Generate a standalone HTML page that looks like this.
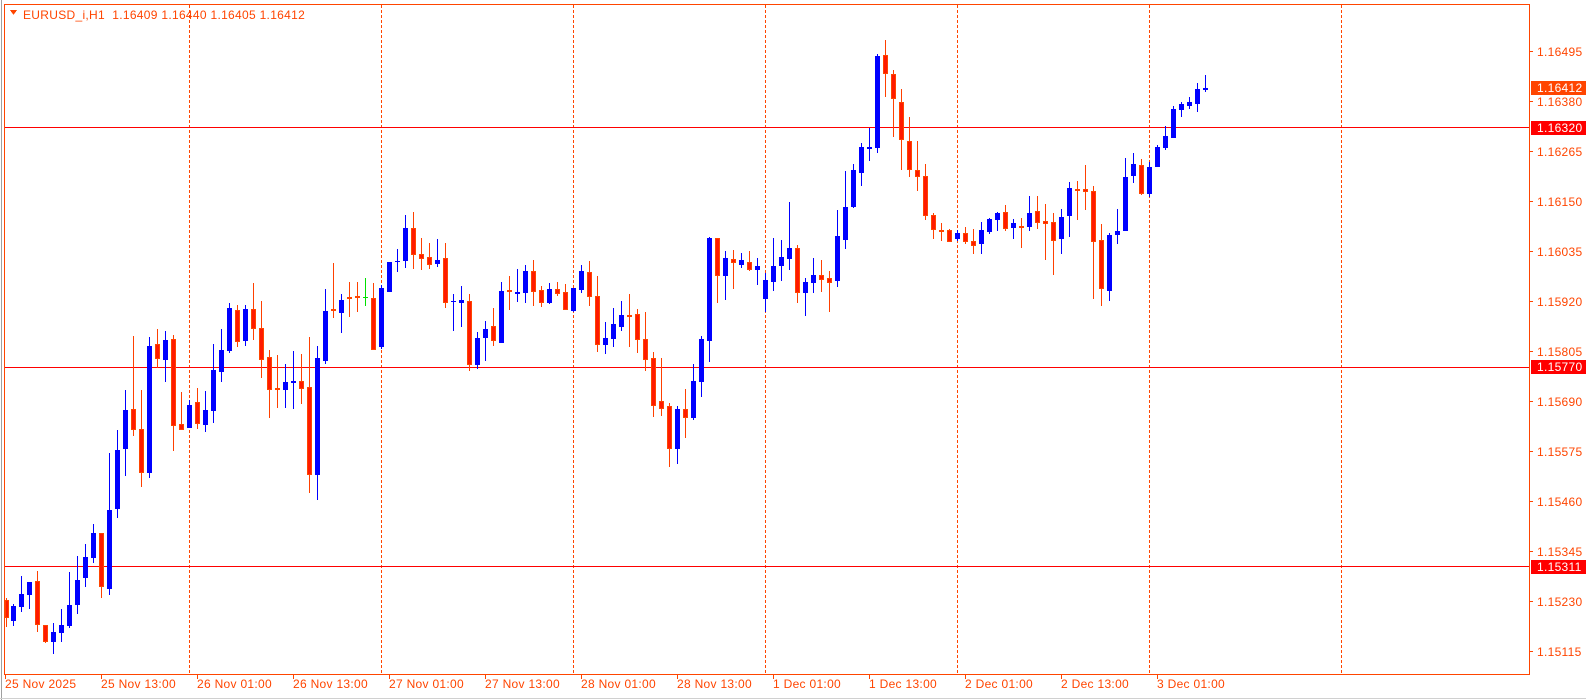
<!DOCTYPE html>
<html><head><meta charset="utf-8"><style>
html,body{margin:0;padding:0;background:#fff;}
body{width:1586px;height:700px;overflow:hidden;position:relative;font-family:"Liberation Sans",sans-serif;}
svg{position:absolute;left:0;top:0;}
text{font-family:"Liberation Sans",sans-serif;font-size:12px;letter-spacing:0.3px;white-space:pre;}
.b line{stroke:#0000ff;stroke-width:1}
.b rect{fill:#0000ff}
.r line{stroke:#ff4000;stroke-width:1}
.r rect{fill:#ff1a00;stroke:#ff4500;stroke-width:1}
</style></head><body>
<svg width="1586" height="700" viewBox="0 0 1586 700" shape-rendering="crispEdges">
<rect x="0" y="0" width="1586" height="700" fill="#fff"/>
<line x1="1.5" y1="0" x2="1.5" y2="700" stroke="#a0a0a0"/>
<line x1="0" y1="698.5" x2="1586" y2="698.5" stroke="#d0d0d0"/>
<rect x="4.5" y="4.5" width="1525" height="670" fill="none" stroke="#ff4500"/>
<g stroke="#ff4500" stroke-dasharray="3,2">
<line x1="189.5" y1="5" x2="189.5" y2="674"/><line x1="381.5" y1="5" x2="381.5" y2="674"/>
<line x1="573.5" y1="5" x2="573.5" y2="674"/><line x1="765.5" y1="5" x2="765.5" y2="674"/>
<line x1="957.5" y1="5" x2="957.5" y2="674"/><line x1="1149.5" y1="5" x2="1149.5" y2="674"/>
<line x1="1341.5" y1="5" x2="1341.5" y2="674"/>
</g>
<g stroke="#ff0000"><line x1="5" y1="127.5" x2="1529" y2="127.5"/><line x1="5" y1="367.5" x2="1529" y2="367.5"/><line x1="5" y1="566.5" x2="1529" y2="566.5"/></g>
<polygon points="10,10 17,10 13.5,15" fill="#ff4500"/>
<text x="23" y="19" fill="#ff4500" xml:space="preserve">EURUSD_i,H1  1.16409 1.16440 1.16405 1.16412</text>
<g fill="#ff4500" stroke="#ff4500">
<line x1="1530" y1="51.5" x2="1533" y2="51.5"/><line x1="1530" y1="101.5" x2="1533" y2="101.5"/><line x1="1530" y1="151.5" x2="1533" y2="151.5"/><line x1="1530" y1="201.5" x2="1533" y2="201.5"/><line x1="1530" y1="251.5" x2="1533" y2="251.5"/><line x1="1530" y1="301.5" x2="1533" y2="301.5"/><line x1="1530" y1="351.5" x2="1533" y2="351.5"/><line x1="1530" y1="401.5" x2="1533" y2="401.5"/><line x1="1530" y1="451.5" x2="1533" y2="451.5"/><line x1="1530" y1="501.5" x2="1533" y2="501.5"/><line x1="1530" y1="551.5" x2="1533" y2="551.5"/><line x1="1530" y1="601.5" x2="1533" y2="601.5"/><line x1="1530" y1="651.5" x2="1533" y2="651.5"/>
</g>
<g fill="#ff4500">
<text x="1537" y="56">1.16495</text><text x="1537" y="106">1.16380</text><text x="1537" y="156">1.16265</text><text x="1537" y="206">1.16150</text><text x="1537" y="256">1.16035</text><text x="1537" y="306">1.15920</text><text x="1537" y="356">1.15805</text><text x="1537" y="406">1.15690</text><text x="1537" y="456">1.15575</text><text x="1537" y="506">1.15460</text><text x="1537" y="556">1.15345</text><text x="1537" y="606">1.15230</text><text x="1537" y="656">1.15115</text>
</g>
<rect x="1531" y="81" width="55" height="14" fill="#ff4500"/><text x="1537" y="92" fill="#fff">1.16412</text>
<rect x="1531" y="121" width="55" height="14" fill="#ff0000"/><text x="1537" y="132" fill="#fff">1.16320</text>
<rect x="1531" y="360" width="55" height="14" fill="#ff0000"/><text x="1537" y="371" fill="#fff">1.15770</text>
<rect x="1531" y="560" width="55" height="14" fill="#ff0000"/><text x="1537" y="571" fill="#fff">1.15311</text>
<g stroke="#ff4500"><line x1="5.5" y1="675" x2="5.5" y2="679"/><line x1="101.5" y1="675" x2="101.5" y2="679"/><line x1="197.5" y1="675" x2="197.5" y2="679"/><line x1="293.5" y1="675" x2="293.5" y2="679"/><line x1="389.5" y1="675" x2="389.5" y2="679"/><line x1="485.5" y1="675" x2="485.5" y2="679"/><line x1="581.5" y1="675" x2="581.5" y2="679"/><line x1="677.5" y1="675" x2="677.5" y2="679"/><line x1="773.5" y1="675" x2="773.5" y2="679"/><line x1="869.5" y1="675" x2="869.5" y2="679"/><line x1="965.5" y1="675" x2="965.5" y2="679"/><line x1="1061.5" y1="675" x2="1061.5" y2="679"/><line x1="1157.5" y1="675" x2="1157.5" y2="679"/></g>
<g fill="#ff4500">
<text x="5" y="688">25 Nov 2025</text><text x="101" y="688">25 Nov 13:00</text><text x="197" y="688">26 Nov 01:00</text><text x="293" y="688">26 Nov 13:00</text><text x="389" y="688">27 Nov 01:00</text><text x="485" y="688">27 Nov 13:00</text><text x="581" y="688">28 Nov 01:00</text><text x="677" y="688">28 Nov 13:00</text><text x="773" y="688">1 Dec 01:00</text><text x="869" y="688">1 Dec 13:00</text><text x="965" y="688">2 Dec 01:00</text><text x="1061" y="688">2 Dec 13:00</text><text x="1157" y="688">3 Dec 01:00</text>
</g>
<g class="b">
<line x1="13.5" y1="604" x2="13.5" y2="626"/><rect x="11" y="606" width="5" height="15"/>
<line x1="21.5" y1="576" x2="21.5" y2="612"/><rect x="19" y="594" width="5" height="13"/>
<line x1="29.5" y1="582" x2="29.5" y2="609"/><rect x="27" y="582" width="5" height="13"/>
<line x1="53.5" y1="623" x2="53.5" y2="654"/><rect x="51" y="632" width="5" height="10"/>
<line x1="61.5" y1="609" x2="61.5" y2="642"/><rect x="59" y="625" width="5" height="8"/>
<line x1="69.5" y1="572" x2="69.5" y2="628"/><rect x="67" y="605" width="5" height="21"/>
<line x1="77.5" y1="556" x2="77.5" y2="614"/><rect x="75" y="580" width="5" height="25"/>
<line x1="85.5" y1="544" x2="85.5" y2="587"/><rect x="83" y="557" width="5" height="21"/>
<line x1="93.5" y1="524" x2="93.5" y2="563"/><rect x="91" y="533" width="5" height="25"/>
<line x1="109.5" y1="453" x2="109.5" y2="595"/><rect x="107" y="510" width="5" height="79"/>
<line x1="117.5" y1="430" x2="117.5" y2="518"/><rect x="115" y="450" width="5" height="59"/>
<line x1="125.5" y1="390" x2="125.5" y2="476"/><rect x="123" y="410" width="5" height="39"/>
<line x1="149.5" y1="337" x2="149.5" y2="478"/><rect x="147" y="346" width="5" height="127"/>
<line x1="165.5" y1="331" x2="165.5" y2="382"/><rect x="163" y="340" width="5" height="20"/>
<line x1="189.5" y1="400" x2="189.5" y2="428"/><rect x="187" y="405" width="5" height="23"/>
<line x1="205.5" y1="391" x2="205.5" y2="432"/><rect x="203" y="410" width="5" height="15"/>
<line x1="213.5" y1="344" x2="213.5" y2="423"/><rect x="211" y="370" width="5" height="41"/>
<line x1="221.5" y1="329" x2="221.5" y2="382"/><rect x="219" y="350" width="5" height="22"/>
<line x1="229.5" y1="303" x2="229.5" y2="353"/><rect x="227" y="308" width="5" height="43"/>
<line x1="245.5" y1="305" x2="245.5" y2="346"/><rect x="243" y="309" width="5" height="32"/>
<line x1="285.5" y1="364" x2="285.5" y2="408"/><rect x="283" y="382" width="5" height="8"/>
<line x1="293.5" y1="351" x2="293.5" y2="409"/><rect x="291" y="381" width="5" height="2"/>
<line x1="317.5" y1="346" x2="317.5" y2="500"/><rect x="315" y="358" width="5" height="117"/>
<line x1="325.5" y1="289" x2="325.5" y2="364"/><rect x="323" y="311" width="5" height="50"/>
<line x1="341.5" y1="294" x2="341.5" y2="333"/><rect x="339" y="300" width="5" height="13"/>
<line x1="381.5" y1="285" x2="381.5" y2="349"/><rect x="379" y="288" width="5" height="59"/>
<line x1="389.5" y1="262" x2="389.5" y2="292"/><rect x="387" y="262" width="5" height="30"/>
<line x1="397.5" y1="249" x2="397.5" y2="272"/><rect x="395" y="261" width="5" height="1"/>
<line x1="405.5" y1="215" x2="405.5" y2="268"/><rect x="403" y="228" width="5" height="33"/>
<line x1="437.5" y1="239" x2="437.5" y2="267"/><rect x="435" y="260" width="5" height="4"/>
<line x1="453.5" y1="294" x2="453.5" y2="331"/><rect x="451" y="301" width="5" height="1"/>
<line x1="461.5" y1="286" x2="461.5" y2="327"/><rect x="459" y="300" width="5" height="3"/>
<line x1="477.5" y1="332" x2="477.5" y2="369"/><rect x="475" y="338" width="5" height="27"/>
<line x1="485.5" y1="321" x2="485.5" y2="361"/><rect x="483" y="329" width="5" height="9"/>
<line x1="501.5" y1="282" x2="501.5" y2="343"/><rect x="499" y="291" width="5" height="52"/>
<line x1="517.5" y1="269" x2="517.5" y2="302"/><rect x="515" y="292" width="5" height="2"/>
<line x1="525.5" y1="265" x2="525.5" y2="303"/><rect x="523" y="271" width="5" height="22"/>
<line x1="549.5" y1="283" x2="549.5" y2="304"/><rect x="547" y="289" width="5" height="14"/>
<line x1="573.5" y1="288" x2="573.5" y2="312"/><rect x="571" y="288" width="5" height="23"/>
<line x1="581.5" y1="265" x2="581.5" y2="293"/><rect x="579" y="271" width="5" height="19"/>
<line x1="605.5" y1="322" x2="605.5" y2="354"/><rect x="603" y="338" width="5" height="7"/>
<line x1="613.5" y1="308" x2="613.5" y2="347"/><rect x="611" y="324" width="5" height="15"/>
<line x1="621.5" y1="301" x2="621.5" y2="331"/><rect x="619" y="315" width="5" height="12"/>
<line x1="677.5" y1="406" x2="677.5" y2="464"/><rect x="675" y="409" width="5" height="40"/>
<line x1="693.5" y1="364" x2="693.5" y2="420"/><rect x="691" y="381" width="5" height="37"/>
<line x1="701.5" y1="336" x2="701.5" y2="397"/><rect x="699" y="339" width="5" height="43"/>
<line x1="709.5" y1="237" x2="709.5" y2="362"/><rect x="707" y="238" width="5" height="103"/>
<line x1="725.5" y1="251" x2="725.5" y2="300"/><rect x="723" y="258" width="5" height="18"/>
<line x1="741.5" y1="253" x2="741.5" y2="268"/><rect x="739" y="260" width="5" height="5"/>
<line x1="757.5" y1="258" x2="757.5" y2="285"/><rect x="755" y="266" width="5" height="4"/>
<line x1="765.5" y1="273" x2="765.5" y2="312"/><rect x="763" y="280" width="5" height="19"/>
<line x1="773.5" y1="238" x2="773.5" y2="291"/><rect x="771" y="266" width="5" height="16"/>
<line x1="781.5" y1="240" x2="781.5" y2="281"/><rect x="779" y="257" width="5" height="9"/>
<line x1="789.5" y1="202" x2="789.5" y2="270"/><rect x="787" y="248" width="5" height="11"/>
<line x1="805.5" y1="278" x2="805.5" y2="316"/><rect x="803" y="282" width="5" height="11"/>
<line x1="813.5" y1="258" x2="813.5" y2="293"/><rect x="811" y="275" width="5" height="8"/>
<line x1="837.5" y1="210" x2="837.5" y2="287"/><rect x="835" y="236" width="5" height="45"/>
<line x1="845.5" y1="171" x2="845.5" y2="249"/><rect x="843" y="207" width="5" height="33"/>
<line x1="853.5" y1="164" x2="853.5" y2="208"/><rect x="851" y="170" width="5" height="37"/>
<line x1="861.5" y1="143" x2="861.5" y2="186"/><rect x="859" y="147" width="5" height="26"/>
<line x1="869.5" y1="128" x2="869.5" y2="161"/><rect x="867" y="147" width="5" height="2"/>
<line x1="877.5" y1="54" x2="877.5" y2="153"/><rect x="875" y="56" width="5" height="92"/>
<line x1="957.5" y1="230" x2="957.5" y2="241"/><rect x="955" y="233" width="5" height="6"/>
<line x1="981.5" y1="222" x2="981.5" y2="254"/><rect x="979" y="230" width="5" height="14"/>
<line x1="989.5" y1="218" x2="989.5" y2="234"/><rect x="987" y="219" width="5" height="13"/>
<line x1="997.5" y1="212" x2="997.5" y2="231"/><rect x="995" y="213" width="5" height="7"/>
<line x1="1013.5" y1="219" x2="1013.5" y2="239"/><rect x="1011" y="223" width="5" height="5"/>
<line x1="1029.5" y1="196" x2="1029.5" y2="231"/><rect x="1027" y="213" width="5" height="14"/>
<line x1="1061.5" y1="209" x2="1061.5" y2="254"/><rect x="1059" y="217" width="5" height="22"/>
<line x1="1069.5" y1="182" x2="1069.5" y2="237"/><rect x="1067" y="188" width="5" height="28"/>
<line x1="1109.5" y1="233" x2="1109.5" y2="301"/><rect x="1107" y="235" width="5" height="56"/>
<line x1="1117.5" y1="209" x2="1117.5" y2="244"/><rect x="1115" y="231" width="5" height="4"/>
<line x1="1125.5" y1="158" x2="1125.5" y2="231"/><rect x="1123" y="177" width="5" height="54"/>
<line x1="1133.5" y1="153" x2="1133.5" y2="183"/><rect x="1131" y="164" width="5" height="12"/>
<line x1="1149.5" y1="162" x2="1149.5" y2="197"/><rect x="1147" y="167" width="5" height="27"/>
<line x1="1157.5" y1="145" x2="1157.5" y2="167"/><rect x="1155" y="147" width="5" height="20"/>
<line x1="1165.5" y1="126" x2="1165.5" y2="150"/><rect x="1163" y="136" width="5" height="12"/>
<line x1="1173.5" y1="106" x2="1173.5" y2="138"/><rect x="1171" y="109" width="5" height="29"/>
<line x1="1181.5" y1="102" x2="1181.5" y2="117"/><rect x="1179" y="104" width="5" height="6"/>
<line x1="1189.5" y1="97" x2="1189.5" y2="109"/><rect x="1187" y="102" width="5" height="4"/>
<line x1="1197.5" y1="83" x2="1197.5" y2="112"/><rect x="1195" y="89" width="5" height="15"/>
<line x1="1205.5" y1="75" x2="1205.5" y2="92"/><rect x="1203" y="88" width="5" height="2"/>
</g>
<g class="r">
<line x1="6.5" y1="598" x2="6.5" y2="627"/><rect x="5.5" y="600.5" width="3" height="17"/>
<line x1="37.5" y1="571" x2="37.5" y2="632"/><rect x="35.5" y="581.5" width="4" height="43"/>
<line x1="45.5" y1="625" x2="45.5" y2="643"/><rect x="43.5" y="625.5" width="4" height="16"/>
<line x1="101.5" y1="533" x2="101.5" y2="598"/><rect x="99.5" y="533.5" width="4" height="53"/>
<line x1="133.5" y1="336" x2="133.5" y2="436"/><rect x="131.5" y="409.5" width="4" height="20"/>
<line x1="141.5" y1="390" x2="141.5" y2="487"/><rect x="139.5" y="429.5" width="4" height="43"/>
<line x1="157.5" y1="329" x2="157.5" y2="368"/><rect x="155.5" y="344.5" width="4" height="14"/>
<line x1="173.5" y1="335" x2="173.5" y2="451"/><rect x="171.5" y="339.5" width="4" height="86"/>
<line x1="181.5" y1="392" x2="181.5" y2="430"/><rect x="179.5" y="424.5" width="4" height="5"/>
<line x1="197.5" y1="388" x2="197.5" y2="429"/><rect x="195.5" y="402.5" width="4" height="21"/>
<line x1="237.5" y1="305" x2="237.5" y2="347"/><rect x="235.5" y="310.5" width="4" height="31"/>
<line x1="253.5" y1="283" x2="253.5" y2="340"/><rect x="251.5" y="309.5" width="4" height="19"/>
<line x1="261.5" y1="301" x2="261.5" y2="378"/><rect x="259.5" y="328.5" width="4" height="31"/>
<line x1="269.5" y1="350" x2="269.5" y2="418"/><rect x="267.5" y="357.5" width="4" height="32"/>
<line x1="277.5" y1="355" x2="277.5" y2="408"/><rect x="275.5" y="388.5" width="4" height="1"/>
<line x1="301.5" y1="354" x2="301.5" y2="404"/><rect x="299.5" y="381.5" width="4" height="7"/>
<line x1="309.5" y1="337" x2="309.5" y2="493"/><rect x="307.5" y="387.5" width="4" height="87"/>
<line x1="333.5" y1="263" x2="333.5" y2="318"/><rect x="331.5" y="309.5" width="4" height="1"/>
<line x1="349.5" y1="282" x2="349.5" y2="317"/><rect x="347.5" y="297.5" width="4" height="1"/>
<line x1="357.5" y1="282" x2="357.5" y2="312"/><rect x="355.5" y="296.5" width="4" height="1"/>
<line x1="373.5" y1="283" x2="373.5" y2="350"/><rect x="371.5" y="298.5" width="4" height="51"/>
<line x1="413.5" y1="212" x2="413.5" y2="269"/><rect x="411.5" y="228.5" width="4" height="26"/>
<line x1="421.5" y1="238" x2="421.5" y2="270"/><rect x="419.5" y="254.5" width="4" height="4"/>
<line x1="429.5" y1="243" x2="429.5" y2="269"/><rect x="427.5" y="257.5" width="4" height="7"/>
<line x1="445.5" y1="243" x2="445.5" y2="308"/><rect x="443.5" y="258.5" width="4" height="44"/>
<line x1="469.5" y1="294" x2="469.5" y2="371"/><rect x="467.5" y="301.5" width="4" height="63"/>
<line x1="493.5" y1="308" x2="493.5" y2="346"/><rect x="491.5" y="326.5" width="4" height="14"/>
<line x1="509.5" y1="276" x2="509.5" y2="310"/><rect x="507.5" y="290.5" width="4" height="1"/>
<line x1="533.5" y1="260" x2="533.5" y2="306"/><rect x="531.5" y="271.5" width="4" height="20"/>
<line x1="541.5" y1="286" x2="541.5" y2="307"/><rect x="539.5" y="290.5" width="4" height="12"/>
<line x1="557.5" y1="282" x2="557.5" y2="296"/><rect x="555.5" y="289.5" width="4" height="4"/>
<line x1="565.5" y1="284" x2="565.5" y2="310"/><rect x="563.5" y="292.5" width="4" height="17"/>
<line x1="589.5" y1="261" x2="589.5" y2="306"/><rect x="587.5" y="272.5" width="4" height="24"/>
<line x1="597.5" y1="276" x2="597.5" y2="352"/><rect x="595.5" y="296.5" width="4" height="48"/>
<line x1="629.5" y1="294" x2="629.5" y2="347"/><rect x="627.5" y="315.5" width="4" height="1"/>
<line x1="637.5" y1="309" x2="637.5" y2="353"/><rect x="635.5" y="314.5" width="4" height="25"/>
<line x1="645.5" y1="312" x2="645.5" y2="371"/><rect x="643.5" y="339.5" width="4" height="20"/>
<line x1="653.5" y1="352" x2="653.5" y2="417"/><rect x="651.5" y="358.5" width="4" height="47"/>
<line x1="661.5" y1="358" x2="661.5" y2="416"/><rect x="659.5" y="401.5" width="4" height="7"/>
<line x1="669.5" y1="403" x2="669.5" y2="467"/><rect x="667.5" y="406.5" width="4" height="42"/>
<line x1="685.5" y1="389" x2="685.5" y2="438"/><rect x="683.5" y="409.5" width="4" height="8"/>
<line x1="717.5" y1="238" x2="717.5" y2="303"/><rect x="715.5" y="238.5" width="4" height="37"/>
<line x1="733.5" y1="250" x2="733.5" y2="289"/><rect x="731.5" y="259.5" width="4" height="3"/>
<line x1="749.5" y1="251" x2="749.5" y2="271"/><rect x="747.5" y="262.5" width="4" height="7"/>
<line x1="797.5" y1="245" x2="797.5" y2="303"/><rect x="795.5" y="248.5" width="4" height="44"/>
<line x1="821.5" y1="260" x2="821.5" y2="292"/><rect x="819.5" y="275.5" width="4" height="4"/>
<line x1="829.5" y1="271" x2="829.5" y2="312"/><rect x="827.5" y="278.5" width="4" height="4"/>
<line x1="885.5" y1="40" x2="885.5" y2="97"/><rect x="883.5" y="55.5" width="4" height="18"/>
<line x1="893.5" y1="70" x2="893.5" y2="137"/><rect x="891.5" y="74.5" width="4" height="24"/>
<line x1="901.5" y1="89" x2="901.5" y2="170"/><rect x="899.5" y="102.5" width="4" height="37"/>
<line x1="909.5" y1="117" x2="909.5" y2="177"/><rect x="907.5" y="141.5" width="4" height="28"/>
<line x1="917.5" y1="141" x2="917.5" y2="191"/><rect x="915.5" y="170.5" width="4" height="6"/>
<line x1="925.5" y1="164" x2="925.5" y2="220"/><rect x="923.5" y="176.5" width="4" height="39"/>
<line x1="933.5" y1="213" x2="933.5" y2="239"/><rect x="931.5" y="215.5" width="4" height="14"/>
<line x1="941.5" y1="223" x2="941.5" y2="241"/><rect x="939.5" y="230.5" width="4" height="1"/>
<line x1="949.5" y1="229" x2="949.5" y2="242"/><rect x="947.5" y="230.5" width="4" height="11"/>
<line x1="965.5" y1="227" x2="965.5" y2="244"/><rect x="963.5" y="233.5" width="4" height="8"/>
<line x1="973.5" y1="229" x2="973.5" y2="254"/><rect x="971.5" y="241.5" width="4" height="4"/>
<line x1="1005.5" y1="205" x2="1005.5" y2="231"/><rect x="1003.5" y="212.5" width="4" height="16"/>
<line x1="1021.5" y1="218" x2="1021.5" y2="248"/><rect x="1019.5" y="226.5" width="4" height="1"/>
<line x1="1037.5" y1="196" x2="1037.5" y2="229"/><rect x="1035.5" y="211.5" width="4" height="11"/>
<line x1="1045.5" y1="204" x2="1045.5" y2="260"/><rect x="1043.5" y="221.5" width="4" height="2"/>
<line x1="1053.5" y1="213" x2="1053.5" y2="275"/><rect x="1051.5" y="222.5" width="4" height="18"/>
<line x1="1077.5" y1="181" x2="1077.5" y2="220"/><rect x="1075.5" y="189.5" width="4" height="1"/>
<line x1="1085.5" y1="165" x2="1085.5" y2="210"/><rect x="1083.5" y="189.5" width="4" height="2"/>
<line x1="1093.5" y1="186" x2="1093.5" y2="299"/><rect x="1091.5" y="191.5" width="4" height="50"/>
<line x1="1101.5" y1="224" x2="1101.5" y2="306"/><rect x="1099.5" y="240.5" width="4" height="48"/>
<line x1="1141.5" y1="159" x2="1141.5" y2="195"/><rect x="1139.5" y="165.5" width="4" height="28"/>
</g>
<line x1="365.5" y1="278" x2="365.5" y2="306" stroke="#00e000"/><rect x="363" y="297" width="5" height="1" fill="#00e000"/>
</svg>
</body></html>
